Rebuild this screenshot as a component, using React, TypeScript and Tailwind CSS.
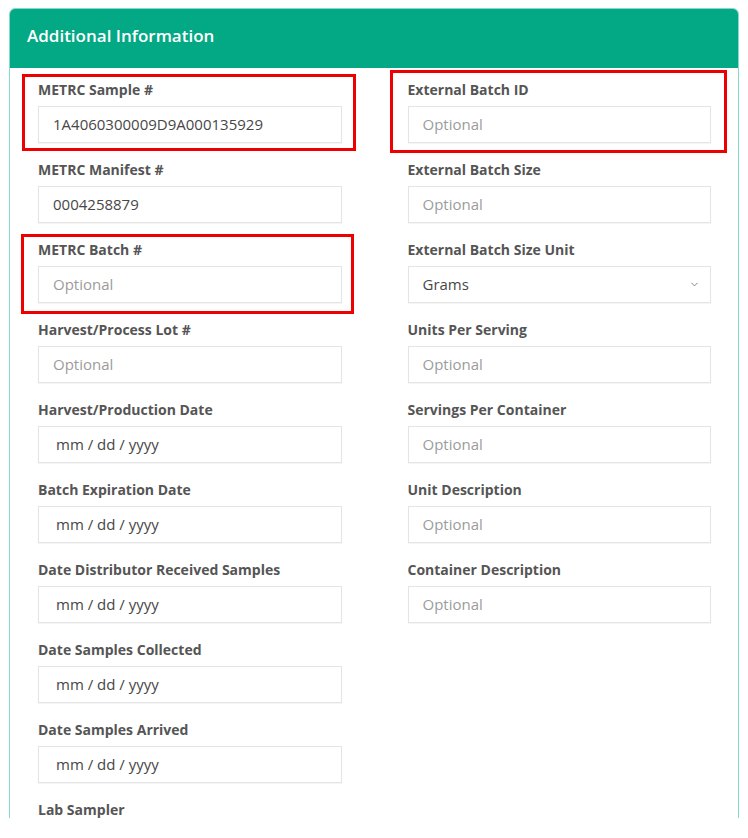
import { ChevronDown } from "lucide-react";

type Field = {
  label: string;
  value?: string;
  placeholder?: string;
  select?: boolean;
  date?: boolean;
  mark?: string;
};

const leftFields: Field[] = [
  { label: "METRC Sample #", value: "1A4060300009D9A000135929", mark: "-left-[16px] -right-[14px] -top-[6px] -bottom-[8px]" },
  { label: "METRC Manifest #", value: "0004258879" },
  { label: "METRC Batch #", placeholder: "Optional", mark: "-left-[17px] -right-[12px] -top-[6px] -bottom-[11px]" },
  { label: "Harvest/Process Lot #", placeholder: "Optional" },
  { label: "Harvest/Production Date", value: "mm / dd / yyyy", date: true },
  { label: "Batch Expiration Date", value: "mm / dd / yyyy", date: true },
  { label: "Date Distributor Received Samples", value: "mm / dd / yyyy", date: true },
  { label: "Date Samples Collected", value: "mm / dd / yyyy", date: true },
  { label: "Date Samples Arrived", value: "mm / dd / yyyy", date: true },
  // input is below the fold, only the label shows
  { label: "Lab Sampler" },
];

const rightFields: Field[] = [
  { label: "External Batch ID", placeholder: "Optional", mark: "-left-[18px] -right-[16px] -top-[10px] -bottom-[10px]" },
  { label: "External Batch Size", placeholder: "Optional" },
  { label: "External Batch Size Unit", value: "Grams", select: true },
  { label: "Units Per Serving", placeholder: "Optional" },
  { label: "Servings Per Container", placeholder: "Optional" },
  { label: "Unit Description", placeholder: "Optional" },
  { label: "Container Description", placeholder: "Optional" },
];

const FormField = ({ field }: { field: Field }) => (
  <div className="relative">
    <label className="block h-[20px] mb-[6px] text-[14px] leading-[20px] font-bold text-[#555555]">
      {field.label}
    </label>
    <div
      className={
        "flex items-center h-[37px] pr-[14px] border border-[#e4e4e4] bg-white shadow-[0_1px_1px_rgba(0,0,0,0.04)] " +
        (field.date ? "pl-[17px]" : "pl-[14px]")
      }
    >
      <span
        className={
          "flex-1 text-[15px] " + (field.value ? "text-[#474747]" : "text-[#9c9c9c]")
        }
      >
        {field.value || field.placeholder}
      </span>
      {field.select && (
        <ChevronDown size={11} strokeWidth={2} className="text-[#777777] -mr-[4px]" />
      )}
    </div>
    {field.mark && (
      <div className={"absolute border-[3px] border-[#ee0000] pointer-events-none " + field.mark} />
    )}
  </div>
);

export default function App() {
  return (
    <div
      className="h-[818px] overflow-hidden bg-white pt-[8px] pl-[9px]"
      style={{ fontFamily: '"Open Sans", sans-serif' }}
    >
      <div className="w-[730px] rounded-t-[6px] border border-[#86d9c9] overflow-hidden">
        <div className="h-[59px] bg-[#03a884] flex items-center px-[17px] pb-[6px]">
          <h2 className="text-[17px] font-semibold text-white">Additional Information</h2>
        </div>
        <div className="grid grid-cols-2 gap-x-[66px] pl-[28px] pr-[27px] pt-[12px]">
          <div className="flex flex-col gap-[17px]">
            {leftFields.map((f) => (
              <FormField key={f.label} field={f} />
            ))}
          </div>
          <div className="flex flex-col gap-[17px]">
            {rightFields.map((f) => (
              <FormField key={f.label} field={f} />
            ))}
          </div>
        </div>
      </div>
    </div>
  );
}
